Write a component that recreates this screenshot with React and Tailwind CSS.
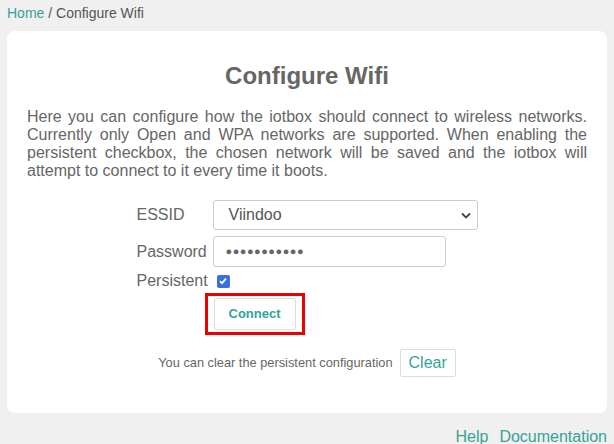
export default function App() {
  return (
    <div className="min-h-[444px] bg-[#f0f0f0] text-[#666] font-['Liberation_Sans',Arial,sans-serif] overflow-hidden">
      <div className="px-[7px] pt-[4px] h-[31px] text-[14px] leading-[18px]">
        <a className="text-[#35a399]">Home</a>
        <span className="text-[#555]"> / Configure Wifi</span>
      </div>

      <div className="mx-[7px] bg-white rounded-[8px] px-[20px] pt-[31px] pb-[36px]">
        <h2 className="text-center text-[24px] leading-[28px] font-bold text-[#666]">Configure Wifi</h2>
        <p className="mt-[18px] text-[16px] leading-[18px] text-justify">
          Here you can configure how the iotbox should connect to wireless networks. Currently only Open and WPA networks are supported. When enabling the persistent checkbox, the chosen network will be saved and the iotbox will attempt to connect to it every time it boots.
        </p>

        <div className="mt-[20px] flex justify-center">
          <div className="w-[341px] text-[16px]">
            <div className="flex items-center h-[30px]">
              <span className="w-[76px]">ESSID</span>
              <div className="flex-1 h-[30px] border border-[#ccc] rounded-[3px] flex items-center justify-between pl-[15px] pr-[6px] text-[#555]">
                <span>Viindoo</span>
                <svg width="10" height="7" viewBox="0 0 10 7"><path d="M1 1.5l4 4 4-4" fill="none" stroke="#444" strokeWidth="1.8" /></svg>
              </div>
            </div>
            <div className="flex items-center h-[31px] mt-[6px]">
              <span className="w-[76px]">Password</span>
              <div className="w-[233px] h-[31px] border border-[#ccc] rounded-[3px] flex items-center pl-[12px] text-[#666] text-[11px] tracking-[0.5px]">
                ●●●●●●●●●●●
              </div>
            </div>
            <div className="flex items-center h-[22px] mt-[3px]">
              <span className="w-[76px]">Persistent</span>
              <div className="w-[13px] h-[13px] ml-[4px] rounded-[2px] bg-[#3b6fe0] flex items-center justify-center">
                <svg width="10" height="10" viewBox="0 0 10 10"><path d="M2 5.2l2 2 4-4.5" fill="none" stroke="white" strokeWidth="1.8" /></svg>
              </div>
            </div>
            <div className="ml-[68px] mt-[1px] w-[100px] h-[42px] border-[3px] border-[#e00] flex items-center justify-center">
              <button className="w-[82px] h-[32px] border border-[#ddd] rounded-[2px] bg-white text-[#35a399] font-bold text-[13px]">Connect</button>
            </div>
          </div>
        </div>

        <div className="mt-[14px] flex justify-center items-center gap-[7px]">
          <span className="text-[12.8px]">You can clear the persistent configuration</span>
          <button className="h-[28px] px-[8px] border border-[#ddd] rounded-[2px] bg-white text-[#35a399] text-[16px]">Clear</button>
        </div>
      </div>

      <div className="flex justify-end gap-[11px] pr-[7px] pt-[12px] text-[16px] text-[#35a399]">
        <a>Help</a>
        <a>Documentation</a>
      </div>
    </div>
  );
}
